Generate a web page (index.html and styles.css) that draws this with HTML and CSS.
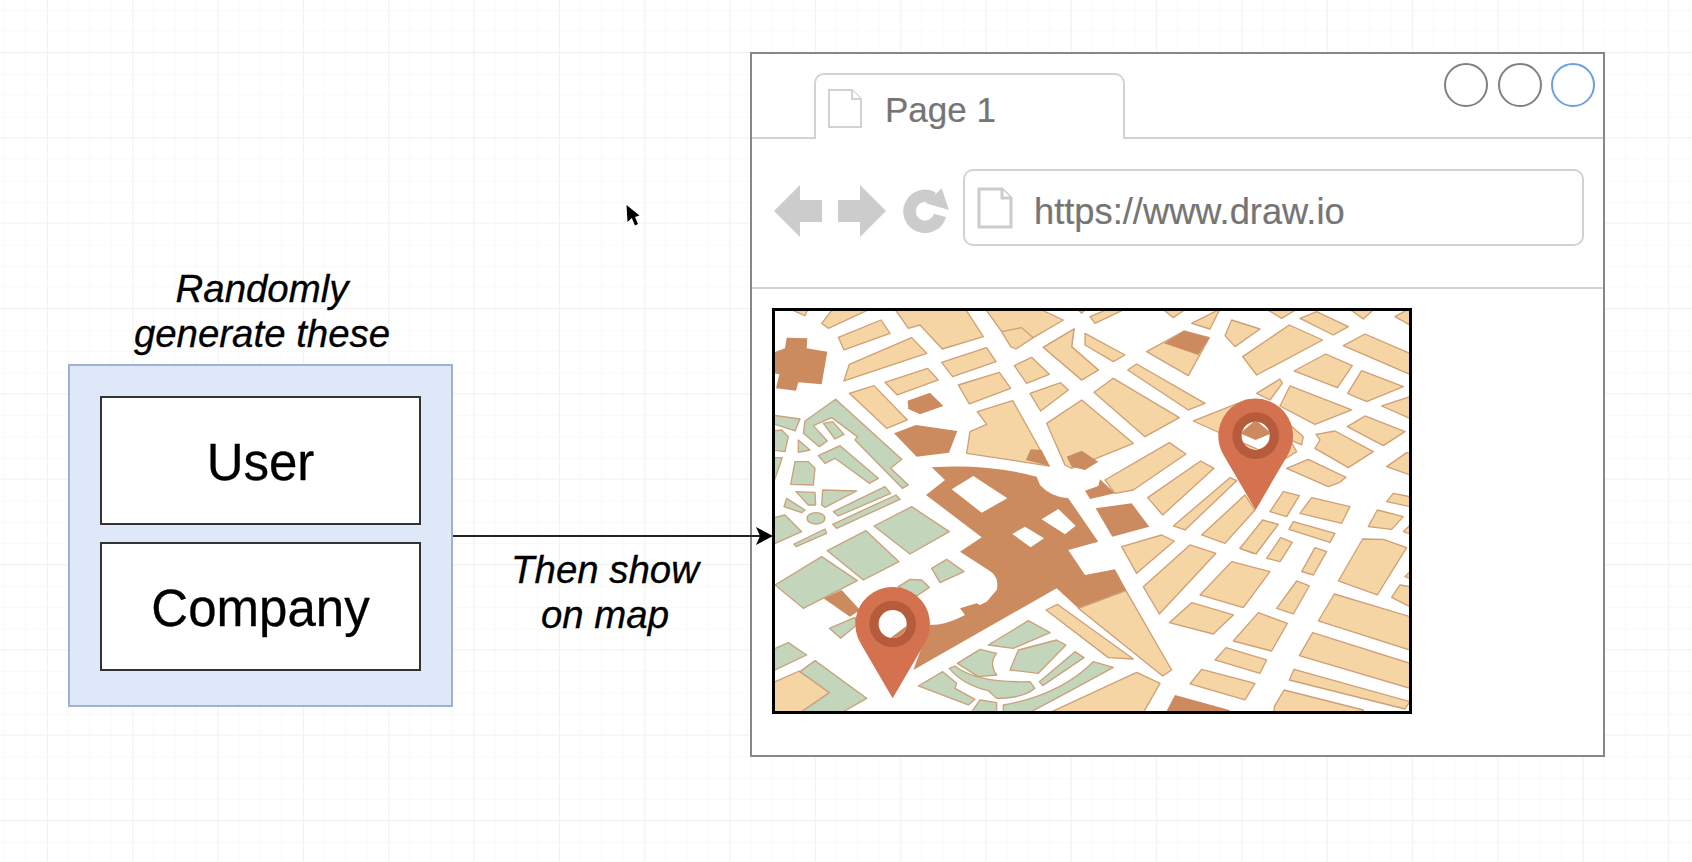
FILE: index.html
```html
<!DOCTYPE html>
<html>
<head>
    <title>Map diagram</title>
    <link rel="stylesheet" href="styles.css">
</head>
<body>
    <div class="note" id="note-gen">Randomly<br>generate these</div>

    <div id="group">
        <div class="entity">User</div>
        <div class="entity">Company</div>
    </div>

    <div class="note" id="note-map">Then show<br>on map</div>

    <svg id="cursor" width="14" height="21" viewBox="0 0 14 21">
        <path d="M0.5,0 L1.5,17 L5.8,13 L9,20.5 L12,19 L9,12 L13.5,10.5 Z"/>
    </svg>

    <div id="browser">
        <div class="tabbar">
            <div class="tab">
                <svg class="doc" width="34" height="39" viewBox="0 0 34 39">
                    <path d="M1,1 H24 L33,10 V38 H1 Z"/>
                    <path d="M24,1 V10 H33"/>
                </svg>
                <span class="tab-title">Page 1</span>
            </div>
            <div class="dots">
                <div class="dot"></div>
                <div class="dot"></div>
                <div class="dot dot-blue"></div>
            </div>
        </div>

        <div class="toolbar">
            <svg class="nav" width="176" height="52" viewBox="0 0 176 52">
                <path d="M0,26 L26,0 V15 H48 V37 H26 V52 Z"/>
                <path d="M64,15 H86 V0 L112,26 L86,52 V37 H64 Z"/>
                <path class="reload" d="M166,30.3 A15.5,15.5 0 1 1 158.7,12.9"/>
                <path d="M167.7,3.3 L175,25 L151.7,18.3 Z"/>
            </svg>
            <div class="address">
                <svg class="doc doc-heavy" width="36" height="42" viewBox="0 0 36 42">
                    <path d="M2,2 H25 L34,11 V40 H2 Z"/>
                    <path d="M25,2 V11 H34"/>
                </svg>
                <span class="url">https://www.draw.io</span>
            </div>
        </div>

        <div class="content">
            <div class="map">
                <svg width="634" height="400" viewBox="775 311 634 400">
                    <defs>
                        <clipPath id="hole-b"><circle cx="497" cy="392" r="42"/></clipPath>
                        <clipPath id="hole-c"><circle cx="368" cy="342" r="42"/></clipPath>
                        <path id="pin" d="M0,223 L-95,60 A112,112 0 1 1 95,60 Z"/>
                    </defs>

                    <!-- top left -->
                    <g transform="translate(770 305) scale(.3333)">
                        <path class="tan" d="M55,10 L115,10 L105,32 Z
                            M190,10 L305,10 L175,70 L155,55 Z
                            M205,97 L333,45 L360,85 L222,135 Z
                            M238,178 L425,98 L470,145 L222,228 Z
                            M345,232 L473,190 L505,225 L382,270 Z
                            M238,265 L312,242 L412,345 L350,370 Z
                            M373,10 L585,10 L640,95 L517,132 L450,60 L415,70 Z
                            M515,172 L650,128 L678,170 L548,215 Z
                            M565,240 L688,202 L722,250 L598,297 Z
                            M645,10 L805,10 L880,45 L790,98 L755,68 L695,80 Z
                            M695,80 L755,68 L790,98 L738,132 L722,125 Z
                            M733,182 L785,157 L838,208 L770,235 Z
                            M780,265 L872,233 L895,255 L812,318 Z
                            M820,127 L912,72 L905,125 L985,195 L935,225 Z
                            M622,320 L728,287 L838,483 L590,445 L600,380 L650,358 Z
                            M920,10 L950,10 L935,25 Z"/>
                        <path class="brown" d="M50,98 L112,100 L110,130 L172,140 L155,238 L85,232 L78,257 L18,250 L28,208 L12,205 L5,145 L45,130 Z
                            M413,287 L480,263 L520,303 L450,328 L415,312 Z
                            M372,385 L438,360 L562,378 L537,443 L440,455 Z
                            M768,465 L782,433 L815,435 L838,483 Z"/>
                        <path class="green" d="M105,348 L197,283 L395,463 L362,490 L415,540 L397,550 L255,405 L262,395 L185,338 L130,362 L172,408 L148,425 L100,385 Z
                            M160,355 L188,350 L222,388 L195,402 Z
                            M5,330 L90,342 L75,378 L5,355 Z
                            M5,378 L35,375 L55,395 L45,440 L5,435 Z
                            M85,405 L120,435 L85,442 Z
                            M145,452 L210,422 L325,520 L298,535 L195,460 L165,475 Z
                            M5,458 L37,458 L12,530 L5,530 Z
                            M75,470 L115,470 L135,490 L130,540 L62,538 Z"/>
                    </g>
                    <g transform="translate(770 430) scale(.3333)">
                        <path class="green" d="M50,205 L105,240 L95,248 L42,230 Z
                            M78,185 L135,187 L137,225 L115,225 Z
                            M158,180 L260,183 L165,232 L155,225 Z
                            M190,245 L345,170 L362,190 L205,258 Z
                            M188,283 L378,195 L390,208 L200,295 Z"/>
                    </g>

                    <!-- top right -->
                    <g transform="translate(1090 305) scale(.3333)">
                        <path class="tan" d="M0,35 L60,10 L110,10 L15,55 Z
                            M215,10 L290,10 L250,38 Z
                            M305,55 L390,12 L360,72 Z
                            M405,92 L425,45 L510,72 L435,125 Z
                            M525,10 L625,10 L575,40 Z
                            M630,40 L680,20 L775,65 L730,90 Z
                            M775,10 L855,10 L820,42 Z
                            M915,35 L960,10 L960,60 Z
                            M458,155 L598,60 L698,105 L500,210 Z
                            M760,122 L825,87 L960,145 L960,208 Z
                            M612,198 L707,147 L787,182 L742,248 Z
                            M773,265 L815,197 L940,245 L830,290 Z
                            M875,303 L960,275 L960,340 Z
                            M570,303 L600,243 L785,315 L675,358 Z
                            M772,365 L825,333 L945,380 L880,422 Z
                            M890,485 L950,443 L960,445 L960,510 Z
                            M890,590 L910,565 L960,575 L960,605 Z
                            M675,430 L690,405 L678,388 L735,378 L850,440 L775,488 Z
                            M590,490 L655,463 L768,517 L750,532 L715,545 Z
                            M630,625 L665,578 L780,605 L755,655 Z
                            M540,620 L580,560 L628,572 L590,635 Z
                            M170,140 L282,78 L358,98 L295,212 Z
                            M-15,85 L105,150 L70,170 L-15,120 Z
                            M113,195 L140,177 L345,295 L295,315 Z
                            M-140,127 L-48,72 L-55,125 L25,195 L-25,225 Z
                            M12,262 L70,220 L268,338 L165,395 Z
                            M310,348 L470,285 L600,360 L640,395 L635,420 L600,405 L620,440 L580,465 L470,420 Z
                            M500,265 L570,222 L577,235 L540,285 Z
                            M-130,355 L-25,285 L130,415 L-55,490 L-75,480 Z"/>
                        <path class="brown" d="M222,115 L282,78 L358,98 L325,150 Z
                            M-70,455 L-25,437 L25,470 L-15,495 L-55,485 Z"/>
                    </g>

                    <!-- middle -->
                    <g transform="translate(930 430) scale(.3333)">
                        <path class="brown" d="M5,112 Q170,100 320,140 L330,165 Q360,200 415,205 L505,335 L415,360 L465,435 L555,418 L590,482 L445,535 L380,475 L-50,720 L0,585 Q50,585 105,555 L90,535 L140,520 L150,525 L170,515 L200,480 Q210,440 175,420 L90,365 L155,322 L-12,195 L45,150 Z
                            M465,182 L505,168 L510,148 L555,190 L480,207 Z
                            M497,235 L605,220 L658,290 L547,320 Z"/>
                        <path class="hole" d="M65,178 L130,138 L232,205 L155,248 Z
                            M247,312 L285,290 L342,325 L302,352 Z
                            M335,268 L385,237 L437,287 L405,313 Z"/>
                        <path class="tan" d="M525,150 L718,38 L768,72 L610,180 L555,190 Z
                            M653,203 L812,93 L852,115 L698,255 Z
                            M730,288 L900,143 L920,152 L765,300 Z
                            M815,315 L945,195 L975,240 L885,340 Z
                            M930,355 L990,290 L1010,300 L970,370 Z
                            M575,350 L695,315 L733,333 L620,430 Z
                            M640,470 L780,345 L858,370 L688,552 Z
                            M810,495 L905,395 L1020,425 L940,533 Z
                            M718,578 L785,518 L910,555 L850,612 Z
                            M445,535 L588,482 L725,720 L698,738 Z"/>
                    </g>

                    <!-- bottom left -->
                    <g transform="translate(770 510) scale(.3333)">
                        <path class="tan" d="M5,520 L88,483 L180,548 L85,612 L5,612 Z"/>
                        <path class="brown" d="M160,265 L215,240 L270,300 L240,320 Z"/>
                        <path class="green" d="M5,25 L45,15 L95,65 L5,105 Z
                            M72,102 L165,57 L170,70 L78,110 Z
                            M172,122 L288,62 L387,155 L280,210 Z
                            M312,48 L425,-10 L538,65 L420,132 Z
                            M15,225 L155,140 L262,212 L100,295 Z
                            M485,175 L530,148 L582,185 L510,218 Z
                            M385,230 L420,208 L455,210 L478,232 L440,258 Z
                            M178,355 L255,322 L260,345 L212,385 Z
                            M5,420 L55,398 L110,435 L5,485 Z
                            M90,485 L135,452 L290,565 L208,612 L85,612 L178,548 Z"/>
                        <ellipse class="green" cx="138" cy="25" rx="27" ry="17"/>
                    </g>
                    <g transform="translate(900 620) scale(.3333)">
                        <path class="green" d="M265,75 L385,2 L450,38 L340,85 Z
                            M330,150 L355,90 L470,60 L498,75 L415,160 Z
                            M418,185 L525,95 L552,113 L428,197 Z
                            M172,130 L240,88 L290,100 Q265,130 290,165 L235,170 Z
                            M148,145 L165,138 Q230,190 390,185 L405,205 Q370,235 290,235 L265,212 Q190,195 148,145 Z
                            M55,198 L128,155 L170,190 L165,205 L225,238 L205,255 Z
                            M205,290 L240,240 L290,248 L290,290 Z
                            M310,290 L310,255 Q480,225 580,125 L640,142 Q480,230 365,290 Z"/>
                    </g>

                    <!-- bottom right -->
                    <g transform="translate(1090 510) scale(.3333)">
                        <path class="tan" d="M-132,300 L-98,283 L130,447 L55,443 Z
                            M-130,612 L140,487 L210,520 L158,612 Z
                            M300,522 L335,478 L495,520 L465,570 Z
                            M375,450 L408,413 L530,450 L510,490 Z
                            M430,393 L505,308 L592,340 L545,423 Z
                            M560,295 L620,213 L658,228 L610,312 Z
                            M635,185 L675,113 L710,125 L670,195 Z
                            M530,145 L572,83 L607,97 L570,155 Z
                            M450,115 L518,30 L565,43 L498,132 Z
                            M597,58 L610,35 L735,70 L720,97 Z
                            M745,213 L818,87 L880,88 L950,113 L862,255 Z
                            M835,50 L862,0 L940,20 L905,58 Z
                            M905,262 L930,225 L960,230 L960,290 Z
                            M685,333 L733,252 L960,320 L960,420 Z
                            M628,437 L668,368 L960,460 L960,535 Z
                            M598,510 L612,478 L960,575 L945,597 Z
                            M553,590 L582,540 L820,600 L820,612 L552,612 Z
                            M940,65 L960,45 L960,72 Z
                            M945,200 L960,185 L960,205 Z"/>
                        <path class="brown" d="M225,612 L255,555 L418,600 L418,612 Z"/>
                    </g>

                    <!-- pins -->
                    <g transform="translate(1090 305) scale(.3333)">
                        <use class="pin" href="#pin" x="497" y="392"/>
                        <circle class="pin-ring" cx="497" cy="392" r="70"/>
                        <circle class="hole" cx="497" cy="392" r="42"/>
                        <g clip-path="url(#hole-b)">
                            <path class="brown" d="M450,385 L497,345 L545,385 L497,405 Z"/>
                            <path class="tan" d="M455,412 L497,430 L520,445 L470,445 Z"/>
                        </g>
                    </g>
                    <g transform="translate(770 510) scale(.3333)">
                        <use class="pin" href="#pin" x="368" y="342"/>
                        <circle class="pin-ring" cx="368" cy="342" r="70"/>
                        <circle class="hole" cx="368" cy="342" r="42"/>
                        <g clip-path="url(#hole-c)">
                            <path class="brown" d="M360,385 L420,340 L420,390 Z"/>
                        </g>
                    </g>
                </svg>
            </div>
        </div>
    </div>

    <svg id="arrow" width="322" height="20" viewBox="453 526 322 20">
        <path class="arrow-line" d="M453,536 H762"/>
        <path class="arrow-head" d="M773,536 L756,527 L760,536 L756,545 Z"/>
    </svg>
</body>
</html>
```

FILE: styles.css
```css
* {
    margin: 0;
    padding: 0;
    box-sizing: border-box;
}

html, body {
    width: 1692px;
    height: 862px;
    overflow: hidden;
}

body {
    position: relative;
    font-family: "Liberation Sans", Arial, sans-serif;
    background-color: #fff;
    background-image:
        linear-gradient(to right, #f2f2f2 1px, transparent 1px),
        linear-gradient(to bottom, #f2f2f2 1px, transparent 1px),
        linear-gradient(to right, #f9f9f9 1px, transparent 1px),
        linear-gradient(to bottom, #f9f9f9 1px, transparent 1px);
    background-size: 85.33px 85.33px, 85.33px 85.33px, 21.33px 21.33px, 21.33px 21.33px;
    background-position: 47px 52px, 47px 52px, 4px 10px, 4px 10px;
}

/* labels and nodes of the diagram */
.note {
    position: absolute;
    font-size: 38.4px;
    line-height: 45px;
    font-style: italic;
    text-align: center;
    color: #000;
    white-space: nowrap;
    -webkit-text-stroke: .3px #000;
}

#note-gen {
    left: 112px;
    top: 266px;
    width: 300px;
}

#note-map {
    left: 455px;
    top: 547px;
    width: 300px;
}

#group {
    position: absolute;
    left: 68px;
    top: 364px;
    width: 385px;
    height: 343px;
    padding: 30px;
    display: flex;
    flex-direction: column;
    gap: 17px;
    background-color: #dfe8f8;
    border: 2px solid #9db2d3;
}

.entity {
    height: 129px;
    padding-top: 4px;
    display: flex;
    align-items: center;
    justify-content: center;
    background-color: #fff;
    border: 2px solid #333;
    font-size: 51px;
    color: #000;
    -webkit-text-stroke: .3px #000;
}

#arrow {
    position: absolute;
    left: 453px;
    top: 526px;
}

.arrow-line {
    stroke: #222;
    stroke-width: 2;
    fill: none;
}

.arrow-head {
    fill: #000;
}

#cursor {
    position: absolute;
    left: 626px;
    top: 205px;
}

/* browser window */
#browser {
    position: absolute;
    left: 750px;
    top: 52px;
    width: 855px;
    height: 705px;
    display: flex;
    flex-direction: column;
    background-color: #fff;
    border: 2px solid #878787;
}

.tabbar {
    height: 85px;
    display: flex;
    align-items: flex-end;
    border-bottom: 2px solid #d2d2d2;
}

.tab {
    width: 311px;
    height: 66px;
    margin-left: 62px;
    margin-bottom: -2px;
    padding: 14px 0 0 12px;
    display: flex;
    align-items: flex-start;
    gap: 23px;
    background-color: #fff;
    border: 2px solid #d2d2d2;
    border-bottom: 0;
    border-radius: 10px 10px 0 0;
}

.tab-title {
    font-size: 35px;
    line-height: 42px;
    color: #757575;
    -webkit-text-stroke: .2px #757575;
}

.doc path {
    fill: #fff;
    stroke: #d2d2d2;
    stroke-width: 2;
}

.doc-heavy {
    flex-shrink: 0;
}

.doc-heavy path {
    stroke: #ccc;
    stroke-width: 3;
}

.dots {
    display: flex;
    gap: 9.5px;
    margin-left: auto;
    margin-right: 8px;
    align-self: flex-start;
    margin-top: 9px;
}

.dot {
    width: 44px;
    height: 44px;
    border: 2px solid #808080;
    border-radius: 50%;
}

.dot-blue {
    border-color: #6c9fe3;
}

.toolbar {
    height: 150px;
    padding: 30px 0 0 22px;
    display: flex;
    align-items: flex-start;
    gap: 13px;
    border-bottom: 2px solid #d2d2d2;
}

.nav {
    margin-top: 16px;
}

.nav path {
    fill: #ccc;
}

.nav .reload {
    fill: none;
    stroke: #ccc;
    stroke-width: 12.5;
}

.address {
    width: 621px;
    height: 77px;
    padding: 16px 0 0 12px;
    display: flex;
    align-items: flex-start;
    gap: 21px;
    border: 2px solid #d2d2d2;
    border-radius: 10px;
}

.url {
    margin-top: 4px;
    font-size: 36.3px;
    line-height: 42px;
    color: #757575;
    -webkit-text-stroke: .2px #757575;
}

.content {
    padding: 19px 0 0 20px;
}

.map {
    width: 640px;
    height: 406px;
    border: 3px solid #000;
    background-color: #fff;
}

.map svg {
    display: block;
}

/* map drawing, sizes are in zoomed units */
.tan {
    fill: #f5d5a3;
    stroke: #cfa077;
    stroke-width: 4;
    stroke-linejoin: round;
}

.brown {
    fill: #cb8b5f;
}

.green {
    fill: #c3d5ba;
    stroke: #c9a27c;
    stroke-width: 4;
    stroke-linejoin: round;
}

.hole {
    fill: #fff;
}

.pin {
    fill: #d4714f;
}

.pin-ring {
    fill: #b65b3c;
}
```
